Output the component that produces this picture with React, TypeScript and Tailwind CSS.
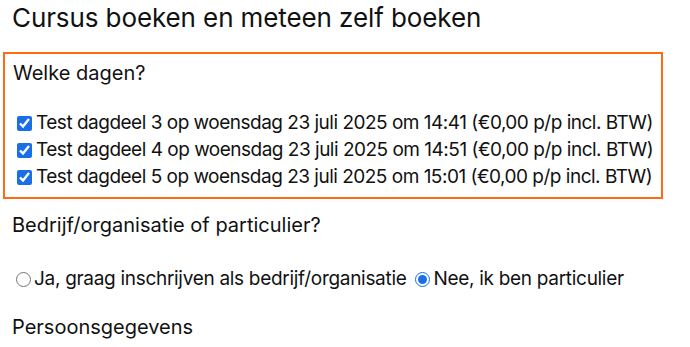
const days = [
  { n: 3, time: '14:41' },
  { n: 4, time: '14:51' },
  { n: 5, time: '15:01' },
];

export default function App() {
  return (
    <div className="bg-white text-[#111] font-['Inter',sans-serif] pl-[3px] pt-[2px] w-[690px] h-[347px] overflow-hidden">
      <h1 className="pl-[9px] text-[26px] leading-[32px] tracking-[-0.1px]">Cursus boeken en meteen zelf boeken</h1>

      <div className="mt-[18px] w-[660px] border-2 border-[#ff6a13] pl-[8px] pt-[5px] pb-[6px]">
        <p className="text-[20px] leading-[28px]">Welke dagen?</p>
        <div className="mt-[23px] flex flex-col">
          {days.map((d) => (
            <label key={d.n} className="flex items-center h-[27px] text-[19px] tracking-[-0.5px] whitespace-nowrap">
              <input
                type="checkbox"
                defaultChecked
                className="ml-[4px] mr-[4px] w-[15px] h-[15px] accent-[#1a6fe6]"
              />
              Test dagdeel {d.n} op woensdag 23 juli 2025 om {d.time} (€0,00 p/p incl. BTW)
            </label>
          ))}
        </div>
      </div>

      <p className="pl-[9px] mt-[12px] text-[20px] leading-[28px]">Bedrijf/organisatie of particulier?</p>

      <div className="pl-[13px] mt-[25px] flex items-center text-[19px] tracking-[-0.3px] h-[30px] whitespace-nowrap">
        <label className="flex items-center">
          <input type="radio" name="soort" className="mr-[3px] w-[15px] h-[15px]" />
          Ja, graag inschrijven als bedrijf/organisatie
        </label>
        <label className="flex items-center ml-[9px]">
          <input type="radio" name="soort" defaultChecked className="mr-[3px] w-[15px] h-[15px] accent-[#1a6fe6]" />
          Nee, ik ben particulier
        </label>
      </div>

      <p className="pl-[9px] mt-[19px] text-[20px] leading-[28px]">Persoonsgegevens</p>
    </div>
  );
}
